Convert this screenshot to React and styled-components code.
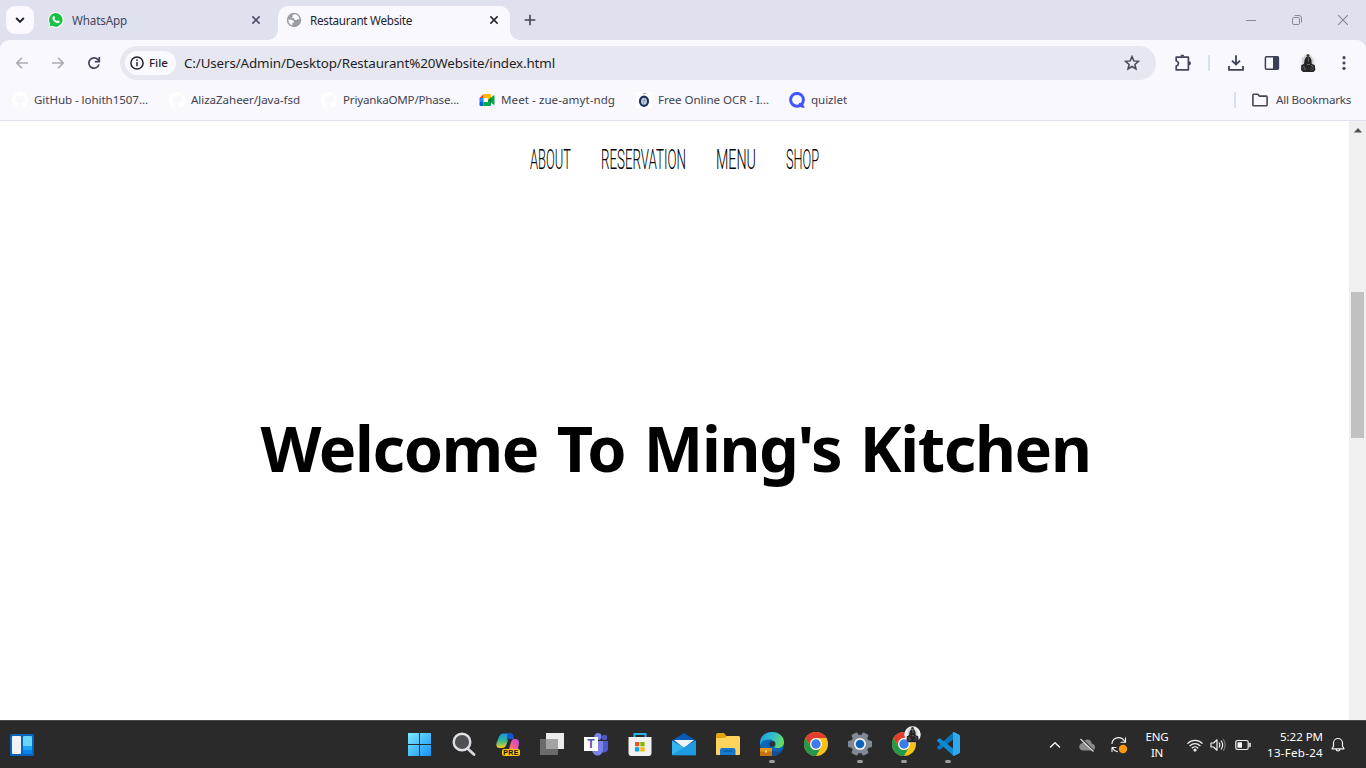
import React, { useLayoutEffect, useRef } from "react";
import styled, { createGlobalStyle } from "styled-components";

const Global = createGlobalStyle`
  * { box-sizing: border-box; }
  html, body { margin: 0; overflow: hidden; background: #fff; }
  body { font-family: "Noto Sans", "Open Sans", sans-serif; font-size: 12px; color: #1f1f1f; }
  svg { display: block; flex: none; }
`;

/* ---------- text that is tracked or squeezed to an exact width ---------- */
const TextBox = styled.span`
  display: block;
  flex: none;
  width: ${(p) => p.$w}px;
  white-space: nowrap;
  line-height: ${(p) => p.$lh || 16}px;
  font-size: ${(p) => p.$size || 12}px;
  font-weight: ${(p) => p.$weight || 400};
  color: ${(p) => p.$color || "inherit"};
  font-family: ${(p) => p.$family || "inherit"};
  word-spacing: ${(p) => p.$word || 0}px;
`;
const TextRun = styled.span`
  display: inline-block;
  transform-origin: 0 50%;
`;
function FitText({ children, w, squeeze, ...rest }) {
  const ref = useRef(null);
  useLayoutEffect(() => {
    const el = ref.current;
    el.style.letterSpacing = "0px";
    el.style.transform = "none";
    const natural = el.getBoundingClientRect().width;
    if (squeeze) el.style.transform = `scaleX(${w / natural})`;
    else el.style.letterSpacing = `${(w - natural) / children.length}px`;
  }, [children, w, squeeze]);
  return (
    <TextBox $w={w} {...rest}>
      <TextRun ref={ref}>{children}</TextRun>
    </TextBox>
  );
}

/* ---------- layout parts ---------- */
const Screen = styled.div`
  width: 1366px; height: 768px; display: flex; flex-direction: column; overflow: hidden; background: #fff;
`;
const TabStrip = styled.div`
  height: 40px; background: #dfe1ee; display: flex; align-items: center; flex: none;
`;
const TabSearch = styled.div`
  width: 28px; height: 28px; margin-left: 6px; border-radius: 9px; background: #fbf9ff;
  display: flex; align-items: center; justify-content: center;
`;
const Tab = styled.div`
  position: relative;
  align-self: flex-end;
  height: 34px; width: ${(p) => p.$w}px;
  padding: 0 8px 6px ${(p) => p.$pad}px;
  display: flex; align-items: center; gap: 8px;
  border-radius: 10px 10px 0 0;
  background: ${(p) => (p.$active ? "#f9f8ff" : "transparent")};
  color: ${(p) => (p.$active ? "#1f1f2a" : "#42455c")};
  ${(p) => p.$active && `
    &::before, &::after {
      content: ""; position: absolute; bottom: 0; width: 10px; height: 10px;
    }
    &::before { left: -10px; background: radial-gradient(circle at 0 0, transparent 9.5px, #f9f8ff 10.2px); }
    &::after { right: -10px; background: radial-gradient(circle at 100% 0, transparent 9.5px, #f9f8ff 10.2px); }
  `}
`;
const Slot = styled.div`
  width: ${(p) => p.$w}px; flex: none; height: 100%;
  display: flex; align-items: center; justify-content: ${(p) => p.$end ? "flex-end" : "center"};
`;
const Push = styled.div`flex: 1;`;
const Chrome = styled.div`
  background: #dfe1ee; flex: none; height: 81px;
`;
const ChromeInner = styled.div`
  height: 81px; background: #f9f8ff; border-radius: 9px 9px 0 0; border-bottom: 1px solid #dfe1ee;
`;
const Toolbar = styled.div`
  height: 46px; padding-left: 4px; display: flex; align-items: center;
`;
const Omnibox = styled.div`
  width: 1036px; height: 34px; margin: 0 9px 0 8px; border-radius: 17px; background: #e7e7f1;
  padding: 0 6px 0 5px; display: flex; align-items: center;
`;
const Chip = styled.div`
  width: 51px; height: 24px; border-radius: 12px; background: #faf9ff; margin-right: 8px;
  padding-left: 5px; display: flex; align-items: center; gap: 5px;
`;
const Divider = styled.div`
  width: 2px; height: 16px; border-radius: 1px; background: #d5defa; flex: none;
`;
const Bookmarks = styled.div`
  height: 34px; padding: 0 15px 6px 12px; display: flex; align-items: center; color: #42434f;
`;
const Bookmark = styled.div`
  display: flex; align-items: center; gap: 6px; width: ${(p) => p.$w}px;
`;
const FolderLink = styled.div`
  display: flex; align-items: center; gap: 8px; margin-left: 16px;
`;
const Page = styled.div`flex: 1; display: flex; min-height: 0; background: #fff;`;
const Content = styled.main`
  flex: 1; display: flex; flex-direction: column; align-items: center; color: #000;
`;
const Nav = styled.nav`
  display: flex; gap: 30px; margin: 23px 1px 0 0; height: 30px;
`;
const Heading = styled.h1`
  margin: 234px 0 0; padding-left: 2px; font-size: inherit; line-height: 80px;
`;
const Scrollbar = styled.div`
  width: 17px; background: #f0f0f0; display: flex; flex-direction: column; align-items: center;
`;
const ScrollArrow = styled.div`
  height: 171px; padding-top: 7px;
`;
const Thumb = styled.div`width: 13px; height: 146px; background: #c1c1c1;`;
const Taskbar = styled.div`
  height: 48px; flex: none; background: #2a2a2a; border-top: 1px solid #484a4b;
  display: flex; align-items: center; color: #fff;
`;
const TaskItem = styled.div`
  width: 44px; height: 47px; display: flex; align-items: center; flex-direction: column; padding-top: 10px;
`;
const RunMark = styled.div`
  width: 6px; height: 3px; border-radius: 2px; background: #9b9b9b; margin-top: 3px;
`;
const Stack = styled.div`
  display: flex; flex-direction: column; align-items: ${(p) => p.$align || "center"};
`;

/* ---------- browser icons ---------- */
const Close = ({ c = "#42455c" }) => (
  <svg width="10" height="10" viewBox="0 0 10 10"><path d="M1.400 1.400l7.200 7.200M8.600 1.400L1.400 8.600" stroke={c} strokeWidth="1.500" /></svg>
);
const WhatsApp = () => (
  <svg width="16" height="16" viewBox="0 0 16 16">
    <path d="M8 .2A7.700 7.700 0 0 0 1.400 12L.3 15.800l3.900-1A7.800 7.800 0 1 0 8 .2z" fill="#fff" />
    <path d="M8 1.100A6.800 6.800 0 0 0 2.300 11.800l-.8 2.800 2.900-.8A6.800 6.800 0 1 0 8 1.100z" fill="#16c245" />
    <path d="M5.300 4.200c.4-.4.900-.3 1.100.1l.6 1.300c.1.400-.7 1-.6 1.200.5 1 1.400 1.800 2.500 2.300.3.100.8-.8 1.100-.7l1.500.7c.4.200.2 1-.2 1.400-.8.900-2.100.8-3.700-.1-1.500-.8-2.600-2-3.100-3.400-.4-1.200.1-2.200.8-2.800z" fill="#fff" />
  </svg>
);
const Globe = () => (
  <svg width="16" height="16" viewBox="0 0 16 16">
    <circle cx="8" cy="8" r="7.200" fill="#9a9da3" />
    <path d="M8.800 2.300C7 2.200 6.200 3.200 6.700 4c.4.700-.8.700-.6 1.500.2.800 1.300.3 1.800.8.700.8 0 1.400 1 1.700s2.200-.1 2.500-.6c.3-.7 1.400-.3 2 .3 0-3-1.800-5.200-4.600-5.400z" fill="#f9f8ff" />
    <path d="M2.300 7.700c1-.3 3-.2 4.200.6 1.200.7 1.700 1.500 1.500 2-.3.700-1.600.1-1.700 1-.1.900.7 1.500 0 1.900C4.200 12.800 2.300 10.700 2.300 7.700z" fill="#f9f8ff" />
  </svg>
);
const Arrow = ({ flip }) => (
  <svg width="14" height="14" viewBox="0 0 14 14">
    <path d={flip ? "M1 7h11M7 1.700L12.200 7 7 12.300" : "M13 7H2M7 1.700L1.800 7 7 12.300"} fill="none" stroke="#a9a9b1" strokeWidth="1.600" />
  </svg>
);
const Reload = () => (
  <svg width="14" height="14" viewBox="0 0 14 14">
    <path d="M12 8.600A5.200 5.200 0 1 1 10.800 3.400l1.200 1.400" fill="none" stroke="#43455a" strokeWidth="1.700" />
    <path d="M12.300 1v4.600H7.800" fill="none" stroke="#43455a" strokeWidth="1.700" />
  </svg>
);
const Info = () => (
  <svg width="14" height="14" viewBox="0 0 14 14">
    <circle cx="7" cy="7" r="6.100" fill="none" stroke="#232329" strokeWidth="1.500" />
    <path d="M7 6v4.300M7 3.500v1.600" stroke="#232329" strokeWidth="1.500" />
  </svg>
);
const Star = () => (
  <svg width="16" height="16" viewBox="0 0 16 16">
    <path d="M8 1.500l1.800 4.400 4.700.4-3.600 3.100 1.100 4.600L8 11.500 4 14l1.100-4.600L1.500 6.300l4.700-.4z" fill="none" stroke="#454756" strokeWidth="1.500" />
  </svg>
);
const Puzzle = () => (
  <svg width="18" height="18" viewBox="0 0 18 18">
    <path d="M2.200 3.200h12.200v12.600H2.200v-3.800c3-.9 3-4.300 0-5z" fill="none" stroke="#43465c" strokeWidth="1.700" strokeLinejoin="round" />
    <path d="M6.300 2.500a2 2 0 0 1 4 0zM15 7.300a2 2 0 0 1 0 4z" fill="#43465c" />
  </svg>
);
const Download = () => (
  <svg width="16" height="16" viewBox="0 0 16 16">
    <path d="M8 .3v9.200M4 5.600l4 4 4-4M1 11v3.800h14V11" fill="none" stroke="#3c4055" strokeWidth="1.800" />
  </svg>
);
const SidePanel = () => (
  <svg width="16" height="16" viewBox="0 0 16 16">
    <rect x="1.400" y="1.700" width="13" height="12.600" rx="1" fill="none" stroke="#3c4055" strokeWidth="1.500" />
    <path d="M9 1.500h5.500v13H9z" fill="#3c4055" />
  </svg>
);
const Rider = ({ size = 20 }) => (
  <svg width={size} height={size} viewBox="0 0 20 20">
    <circle cx="10" cy="10" r="9.700" fill="#f4f4f6" />
    <path d="M4 5q3-3 5-3l4 1 3 4v6l-3 2H4z" fill="#d2d3d1" />
    <circle cx="10" cy="2.600" r="1.500" fill="#3d3434" />
    <path d="M8 4h4l1.500 3 .2 4 3 1 .7 5-2 2H5l-2-2 .3-5L6 11l.5-4z" fill="#252528" />
    <path d="M10 4.500l.7 4M5.500 13l2 4M13 12l2 2M9 11.500h3" stroke="#86797a" strokeWidth=".8" />
    <circle cx="5.700" cy="15.800" r="1.300" fill="none" stroke="#4d505c" strokeWidth=".7" />
    <circle cx="14" cy="16" r="1.300" fill="none" stroke="#4d505c" strokeWidth=".7" />
  </svg>
);
const Dots = () => (
  <svg width="4" height="16" viewBox="0 0 4 16" fill="#43465c">
    <circle cx="2" cy="2.700" r="1.600" /><circle cx="2" cy="8" r="1.600" /><circle cx="2" cy="13.300" r="1.600" />
  </svg>
);
const GitHub = () => (
  <svg width="16" height="16" viewBox="0 0 16 16">
    <path fill="#fff" d="M8 0C3.580 0 0 3.580 0 8c0 3.540 2.290 6.530 5.470 7.590.4.070.55-.17.55-.38 0-.19-.01-.82-.01-1.490-2.010.37-2.530-.49-2.690-.94-.09-.23-.48-.94-.82-1.130-.28-.15-.68-.52-.01-.53.63-.01 1.080.58 1.230.82.72 1.210 1.870.87 2.330.66.07-.52.28-.87.51-1.070-1.780-.2-3.640-.89-3.640-3.950 0-.87.31-1.590.82-2.150-.08-.2-.36-1.020.08-2.120 0 0 .67-.21 2.200.82.640-.18 1.320-.27 2-.27s1.360.09 2 .27c1.530-1.040 2.200-.82 2.200-.82.440 1.100.160 1.920.080 2.120.510.560.820 1.270.820 2.150 0 3.070-1.870 3.750-3.650 3.950.290.250.540.730.540 1.480 0 1.070-.01 1.930-.01 2.200 0 .210.150.460.550.380A8.010 8.010 0 0 0 16 8c0-4.420-3.580-8-8-8z" />
  </svg>
);
const Meet = () => (
  <svg width="16" height="16" viewBox="0 0 16 16">
    <path d="M.5 6L4.500 2v4z" fill="#ea4335" />
    <path d="M.5 6h4v4h-4z" fill="#2684fc" />
    <path d="M.5 10h4v4H1.500q-1 0-1-1z" fill="#0066da" />
    <path d="M4.500 2H11q1 0 1 1v3.300L9 8.200V6H4.500z" fill="#ffba00" />
    <path d="M4.500 10H9V7.700l3 2V13q0 1-1 1H4.500z" fill="#00ac47" />
    <path d="M9 8l3-2.600V11z" fill="#00832d" />
    <path d="M12 5.400l2.500-2q1-.6 1 .4v8.500q0 1-1 .3L12 10.600z" fill="#0ca348" />
  </svg>
);
const Ocr = () => (
  <svg width="16" height="16" viewBox="0 0 16 16">
    <path d="M0 0h16v16H0z" fill="#fff" />
    <ellipse cx="8" cy="9.300" rx="4" ry="4.600" fill="#c5cfdb" stroke="#1b3261" strokeWidth="2.200" />
    <path d="M7 2.200q2-2 3.500-.3M8.700 6.500L7.400 12M6.500 8.500h3" fill="none" stroke="#8d949e" strokeWidth=".9" />
  </svg>
);
const Quizlet = () => (
  <svg width="16" height="16" viewBox="0 0 16 16">
    <circle cx="8" cy="7.800" r="6.400" fill="none" stroke="#4255ff" strokeWidth="3" />
    <path d="M9.500 11h4l2.300 4.800h-3.200z" fill="#4255ff" />
  </svg>
);
const Folder = () => (
  <svg width="16" height="14" viewBox="0 0 16 14">
    <path d="M.9 11.900V2.100q0-.9.9-.9h4l1.700 1.900h6.700q.9 0 .9.900v7.900q0 .9-.9.900H1.800q-.9 0-.9-.9z" fill="none" stroke="#454652" strokeWidth="1.600" />
  </svg>
);

/* ---------- taskbar icons ---------- */
const Ico = ({ children }) => <svg width="26" height="26" viewBox="0 0 26 26">{children}</svg>;
const Widgets = () => (
  <svg width="24" height="22" viewBox="0 0 24 22">
    <rect width="24" height="22" rx="1.500" fill="#0864bd" />
    <rect x="2" y="2" width="9" height="18" rx="1" fill="#f2f2f2" />
    <path d="M13 3q0-1 1-1h7q1 0 1 1v9h-9z" fill="#67d5fd" />
    <path d="M13 12h9v4h-9z" fill="#1ba4f7" />
    <path d="M13 16h9v3q0 1-1 1h-7q-1 0-1-1z" fill="#0783e9" />
  </svg>
);
const Windows = () => (
  <Ico>
    <defs><linearGradient id="win" gradientUnits="userSpaceOnUse" x1="1" y1="2" x2="24" y2="25"><stop stopColor="#7deafe" /><stop offset="1" stopColor="#1392f4" /></linearGradient></defs>
    <path d="M1 2h11v11H1zM13 2h11v11H13zM1 14h11v11H1zM13 14h11v11H13z" fill="url(#win)" />
  </Ico>
);
const Search = () => (
  <Ico>
    <path d="M16.500 17.500l6.500 6" stroke="#d8dade" strokeWidth="2.800" strokeLinecap="round" />
    <circle cx="11" cy="11" r="8.300" fill="#505153" stroke="#dfe1e4" strokeWidth="2.400" />
  </Ico>
);
const PreBadge = styled.span`
  position: absolute; left: 7px; top: 18px; width: 18px; height: 7px; border-radius: 2px; background: #fbc50c;
  color: #111; font: 700 7px/7px "Liberation Sans", sans-serif; text-align: center; letter-spacing: .3px;
`;
const Badged = styled.div`position: relative; width: 26px; height: 26px;`;
const Copilot = () => (
  <Badged>
    <Ico>
      <defs>
        <linearGradient id="cpa" x1="0" y1="0" x2="0" y2="1"><stop stopColor="#1597e5" /><stop offset=".5" stopColor="#34b98f" /><stop offset="1" stopColor="#f4cd20" /></linearGradient>
        <linearGradient id="cpb" x1="1" y1="0" x2="0" y2="1"><stop stopColor="#a850ec" /><stop offset=".5" stopColor="#ec559c" /><stop offset="1" stopColor="#ff8b4d" /></linearGradient>
      </defs>
      <path d="M8.500 2.500H17c-3 1-3.500 4-4.500 8-1 3.500-2 6.500-5 6.500H4.500c-3 0-3.700-2.500-2.800-5.500l2.500-6Q5.500 2.500 8.500 2.500z" fill="url(#cpa)" />
      <path d="M12.500 2.500H16c2 0 2.500 2 3.100 5.500h-5.500c-1 .3-1.500 1.400-2 2.500z" fill="#1556cf" />
      <path d="M14 19c1.500-7 2.500-11 5-11h1.500c3.500 0 4 3 3.300 6l-1 5z" fill="url(#cpb)" />
    </Ico>
    <PreBadge>PRE</PreBadge>
  </Badged>
);
const TaskView = () => (
  <Ico><path d="M7 2h18v16H7z" fill="#ebebeb" /><path d="M1 8h18v16H1z" fill="#6b6b6b" /><path d="M7 8h12v10H7z" fill="#a3a3a3" /></Ico>
);
const LetterTile = styled.span`
  position: absolute; left: 1px; top: 6px; width: 14px; height: 14px; background: #fff; color: #4b53bc;
  font: 700 12px/14px "Liberation Sans", sans-serif; text-align: center;
`;
const Teams = () => (
  <Badged>
    <Ico>
      <circle cx="21.500" cy="6.500" r="2.700" fill="#5059c9" /><circle cx="15" cy="5.500" r="3.600" fill="#7b83eb" />
      <path d="M17 10h8v7q0 4-4 4.500h-4z" fill="#5059c9" />
      <path d="M9 10h11v8c0 4-2.500 6.500-5.500 6.500S9 22 9 18z" fill="#7b83eb" />
    </Ico>
    <LetterTile>T</LetterTile>
  </Badged>
);
const Store = () => (
  <Ico>
    <path d="M7.500 7V3h11v4" fill="none" stroke="#29b3e8" strokeWidth="2" />
    <path d="M1.500 6h23v16q0 3-3 3h-17q-3 0-3-3z" fill="#f1f1f1" />
    <path d="M8 11h4.300v4.300H8z" fill="#f25022" /><path d="M13.300 11h4.300v4.300h-4.300z" fill="#7fba00" />
    <path d="M8 16.200h4.300v4.300H8z" fill="#00a4ef" /><path d="M13.300 16.200h4.300v4.300h-4.300z" fill="#ffb900" />
  </Ico>
);
const Mail = () => (
  <Ico>
    <path d="M1 9.500L13 2l12 7.500V16H1z" fill="#0a5ab5" />
    <path d="M3 9h20l-10 8z" fill="#eef3f8" />
    <path d="M1 9.500l12 7 12-7v14q0 .7-.7.7H1.700q-.7 0-.7-.7z" fill="#35b5f0" />
    <path d="M1 24l12-7.500 12-7v14q0 .7-.7.700z" fill="#1693df" opacity=".75" />
  </Ico>
);
const Explorer = () => (
  <Ico>
    <path d="M1 3.500Q1 2 2.500 2H9l2.500 3H23q2 0 2 2v6H1z" fill="#e2a30c" />
    <path d="M1 7h8.500L12 5h11.500Q25 5 25 6.500V23q0 1-1 1H2q-1 0-1-1z" fill="#ffd35c" />
    <path d="M5 24v-5q0-2 2-2h11.500q2 0 2 2v5z" fill="#1579cf" /><path d="M8.500 20h9" stroke="#0a559f" strokeWidth="1.300" />
  </Ico>
);
const Edge = () => (
  <Ico>
    <defs><linearGradient id="edg" x1="0" y1="0" x2="1" y2=".3"><stop stopColor="#1d9be1" /><stop offset=".6" stopColor="#35c1c5" /><stop offset="1" stopColor="#61db68" /></linearGradient></defs>
    <circle cx="13" cy="13" r="12" fill="#0d66b7" />
    <path d="M1 12C1 5 6.500 1 13 1c7 0 12 4.500 12 10 0 4-3 6-6.500 6-3 0-4-1-3.500-2.500 1.500-3-1-6-4.500-6C6 8.500 2 10 1 15z" fill="url(#edg)" />
    <path d="M10.500 10.500c-2 3.500 0 8.500 5 10 3.500 1 6-.5 8-2-2 4.500-6 6.500-10.500 6.500z" fill="#174d91" />
    <circle cx="13.500" cy="13" r="3" fill="#263447" />
    <path d="M1 17h12v8H1z" fill="#c8720e" /><path d="M1 17h12v3.500H1z" fill="#e4951c" /><path d="M6 19.500h2v2H6z" fill="#ffe26a" />
  </Ico>
);
const ChromeArt = () => (
  <>
    <circle cx="13" cy="13" r="12" fill="#fbc116" />
    <path d="M2.600 7A12 12 0 0 1 23.400 7H13a6 6 0 0 0-5.200 9z" fill="#e33b2e" />
    <path d="M2.600 7A12 12 0 0 0 13 25l5.200-9A6 6 0 0 1 7.800 16z" fill="#229a49" />
    <circle cx="13" cy="13" r="6" fill="#fff" /><circle cx="13" cy="13" r="4.700" fill="#3b7ded" />
  </>
);
const ProfilePin = styled.span`position: absolute; left: 13px; top: -5px;`;
const ChromeProfile = () => (
  <Badged>
    <Ico><ChromeArt /></Ico>
    <ProfilePin><Rider size={17} /></ProfilePin>
  </Badged>
);
const Gear = () => (
  <Ico>
    <g fill="#818a94">
      {[0, 60, 120].map((a) => <rect key={a} x="9.600" y="1" width="6.800" height="24" rx="1.500" transform={`rotate(${a + 30} 13 13)`} />)}
      <circle cx="13" cy="13" r="9.300" />
    </g>
    <circle cx="13" cy="13" r="6" fill="#f0f3f5" /><circle cx="13" cy="13" r="4.300" fill="#0e64b5" />
  </Ico>
);
const Code = () => (
  <Ico>
    <path d="M18 1.500l-15.500 14q-1 1 0 2l1.300 1.100q.7.500 1.500 0L20 7z" fill="#0874b9" />
    <path d="M18 24.500L2.500 10.500q-1-1 0-2l1.300-1.100q.7-.5 1.500 0L20 19z" fill="#0e88d0" />
    <path d="M18 1.300q.7-.5 1.500-.1l4.500 2.200q1 .5 1 1.500v16.200q0 1-1 1.500l-4.500 2.200q-.8.400-1.500-.3z" fill="#2fa9ee" />
  </Ico>
);

/* ---------- tray icons ---------- */
const Stroke = ({ w = 16, h = 16, children }) => (
  <svg width={w} height={h} viewBox={`0 0 ${w} ${h}`} fill="none" stroke="#f4f4f4" strokeWidth="1.200" strokeLinecap="round" strokeLinejoin="round">{children}</svg>
);

const bookmarks = [
  { icon: <GitHub />, label: "GitHub - lohith1507...", w: 114, slot: 157 },
  { icon: <GitHub />, label: "AlizaZaheer/Java-fsd", w: 109, slot: 152 },
  { icon: <GitHub />, label: "PriyankaOMP/Phase...", w: 116, slot: 158 },
  { icon: <Meet />, label: "Meet - zue-amyt-ndg", w: 114, slot: 157 },
  { icon: <Ocr />, label: "Free Online OCR - I...", w: 111, slot: 153 },
  { icon: <Quizlet />, label: "quizlet", w: 36, slot: 60 },
];
const nav = [["ABOUT", 41], ["RESERVATION", 85], ["MENU", 40], ["SHOP", 33]];
const apps = [
  [<Windows />], [<Search />], [<Copilot />], [<TaskView />], [<Teams />], [<Store />], [<Mail />], [<Explorer />],
  [<Edge />, true], [<Ico><ChromeArt /></Ico>], [<Gear />, true], [<ChromeProfile />, true], [<Code />, true],
];

export default function App() {
  return (
    <Screen>
      <Global />
      <TabStrip>
        <TabSearch>
          <svg width="10" height="8" viewBox="0 0 10 8"><path d="M1.200 2L5 5.800 8.800 2" fill="none" stroke="#1f1f2a" strokeWidth="1.900" /></svg>
        </TabSearch>
        <Tab $w={244} $pad={14}>
          <WhatsApp />
          <FitText w={55} $size={11.700} $lh={17}>WhatsApp</FitText>
          <Push />
          <Slot $w={28}><Close /></Slot>
        </Tab>
        <Tab $w={232} $pad={8} $active>
          <Globe />
          <FitText w={102} $size={11.700} $lh={17}>Restaurant Website</FitText>
          <Push />
          <Slot $w={16}><Close c="#24242c" /></Slot>
        </Tab>
        <Slot $w={40}>
          <svg width="12" height="12" viewBox="0 0 12 12"><path d="M6 .7v10.600M.7 6h10.600" stroke="#43444c" strokeWidth="1.600" /></svg>
        </Slot>
        <Push />
        <Slot $w={46}><svg width="10" height="10" viewBox="0 0 10 10"><path d="M0 5.500h10" stroke="#858896" /></svg></Slot>
        <Slot $w={46}>
          <svg width="10" height="10" viewBox="0 0 10 10" fill="none" stroke="#858896"><rect x=".5" y="2.500" width="7" height="7" rx="1.300" /><path d="M2.500.5H7q2.500 0 2.500 2.500v4.500" /></svg>
        </Slot>
        <Slot $w={46}><svg width="10" height="10" viewBox="0 0 10 10"><path d="M0 0l10 10M10 0L0 10" stroke="#858896" strokeWidth="1.100" /></svg></Slot>
      </TabStrip>

      <Chrome>
        <ChromeInner>
          <Toolbar>
            <Slot $w={36}><Arrow /></Slot>
            <Slot $w={36}><Arrow flip /></Slot>
            <Slot $w={36}><Reload /></Slot>
            <Omnibox>
              <Chip><Info /><FitText w={19} $size={11.500} $weight={500}>File</FitText></Chip>
              <FitText w={371} $size={13.400} $lh={20}>C:/Users/Admin/Desktop/Restaurant%20Website/index.html</FitText>
              <Push />
              <Slot $w={36}><Star /></Slot>
            </Omnibox>
            <Slot $w={36}><Puzzle /></Slot>
            <Slot $w={16}><Divider /></Slot>
            <Slot $w={37}><Download /></Slot>
            <Slot $w={36}><SidePanel /></Slot>
            <Slot $w={36}><Rider /></Slot>
            <Slot $w={36}><Dots /></Slot>
          </Toolbar>
          <Bookmarks>
            {bookmarks.map((b) => (
              <Bookmark key={b.label} $w={b.slot}>{b.icon}<FitText w={b.w} $size={11.600}>{b.label}</FitText></Bookmark>
            ))}
            <Push />
            <Divider />
            <FolderLink><Folder /><FitText w={75} $size={11.600}>All Bookmarks</FitText></FolderLink>
          </Bookmarks>
        </ChromeInner>
      </Chrome>

      <Page>
        <Content>
          <Nav>
            {nav.map(([label, w]) => (
              <FitText key={label} w={w} squeeze $size={27.500} $lh={31} $weight={300} $family={'"Roboto", sans-serif'}>{label}</FitText>
            ))}
          </Nav>
          <Heading>
            <FitText w={830} $size={63} $weight={700} $lh={80} $word={3.500}>Welcome To Ming's Kitchen</FitText>
          </Heading>
        </Content>
        <Scrollbar>
          <ScrollArrow><svg width="8" height="5" viewBox="0 0 8 5"><path d="M4 0l4 4.500H0z" fill="#505050" /></svg></ScrollArrow>
          <Thumb />
        </Scrollbar>
      </Page>

      <Taskbar>
        <Slot $w={44}><Widgets /></Slot>
        <Slot $w={354} />
        {apps.map(([icon, running], i) => (
          <TaskItem key={i}>{icon}{running && <RunMark />}</TaskItem>
        ))}
        <Push />
        <Slot $w={32}><Stroke w={12} h={8}><path d="M1.500 6L6 1.800 10.500 6" strokeWidth="1.500" /></Stroke></Slot>
        <Slot $w={32}>
          <svg width="18" height="16" viewBox="0 0 18 16"><path d="M4.500 13.500a3.800 3.800 0 0 1 0-7.500Q6 2.500 9.500 2.500T14 7q3 .3 3 3.200t-3 3.300z" fill="#8b8b8b" /><path d="M3.500 1.500l13 13" stroke="#2a2a2a" strokeWidth="1.500" /><path d="M2.500 2l13 12.500" stroke="#ddd" strokeWidth="1.200" /></svg>
        </Slot>
        <Slot $w={32}>
          <Stroke w={18} h={18}><path d="M2 7.500C2 4 5 1.600 8.500 1.600c3 0 5 1.500 6.300 4M15.500 1.800v4.400H11M2 15.500V11.500h4M2.500 12q1.500 3 5 3.700" strokeWidth="1.100" /><circle cx="13" cy="13" r="4.200" fill="#ff980f" stroke="none" /></Stroke>
        </Slot>
        <Slot $w={44}>
          <Stack><FitText w={23} $size={11.500}>ENG</FitText><FitText w={12} $size={11.500}>IN</FitText></Stack>
        </Slot>
        <Slot $w={32}>
          <Stroke w={16} h={14}><path d="M.8 5.300a10.200 10.200 0 0 1 14.400 0M3 7.700a7.100 7.100 0 0 1 10 0M5.200 10a4 4 0 0 1 5.600 0" /><circle cx="8" cy="12" r="1" fill="#fff" /></Stroke>
        </Slot>
        <Slot $w={14}>
          <Stroke w={16} h={14}><path d="M1 5h2.500L7 1.800v10.400L3.500 9H1zM9.300 5q1.300 2 0 4M11.300 3q2.700 4 0 8" /><path d="M13.500 1.500q3.300 5.500 0 11" stroke="#777" /></Stroke>
        </Slot>
        <Slot $w={36}>
          <Stroke w={16} h={12}><rect x=".8" y="1.500" width="12.400" height="9" rx="1.800" /><path d="M2.500 3.300h4.500v5.400H2.500z" fill="#fff" stroke="none" /><path d="M15 4.500v3" strokeWidth="1.600" /></Stroke>
        </Slot>
        <Slot $w={62} $end>
          <Stack $align="flex-end"><FitText w={43} $size={11.500}>5:22 PM</FitText><FitText w={56} $size={11.500}>13-Feb-24</FitText></Stack>
        </Slot>
        <Slot $w={30}>
          <Stroke w={14} h={16}><path d="M1 11.800l1.500-2.500V6a4.500 4.500 0 0 1 9 0v3.300l1.500 2.500zM5 12q.3 2 2 2t2-2" /></Stroke>
        </Slot>
        <Slot $w={13} />
      </Taskbar>
    </Screen>
  );
}
